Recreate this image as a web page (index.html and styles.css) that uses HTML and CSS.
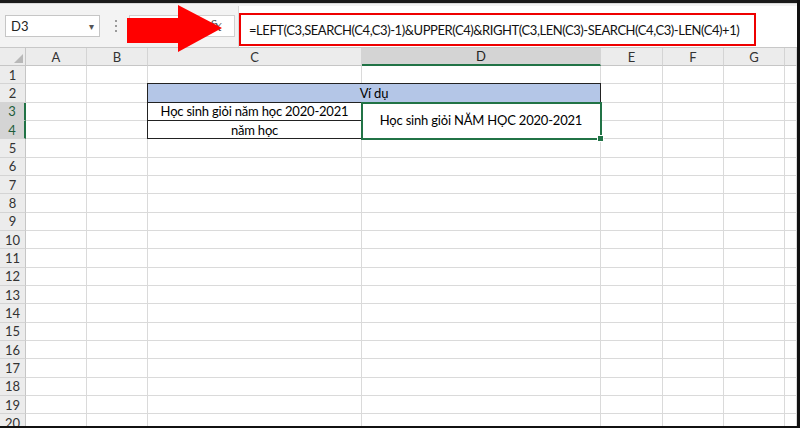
FILE: index.html
```html
<!DOCTYPE html>
<html>
<head>
<meta charset="utf-8">
<link rel="stylesheet" href="styles.css">
</head>
<body>
<div class="frame">
  <div class="topbar"></div>
  <div class="fbar">
    <div class="namebox"><span>D3</span><span class="dd">&#9662;</span></div>
    <div class="dots"><span></span><span></span><span></span></div>
    <div class="fxbox"><span class="fx">fx</span></div>
    <div class="finput">
      <div class="redbox">=LEFT(C3,SEARCH(C4,C3)-1)&amp;UPPER(C4)&amp;RIGHT(C3,LEN(C3)-SEARCH(C4,C3)-LEN(C4)+1)</div>
    </div>
  </div>
  <div class="grid">
    <div class="corner"><svg width="9" height="9" viewBox="0 0 9 9"><polygon points="9,0 9,9 0,9" fill="#b8b8b8"/></svg></div><div class="ch">A</div><div class="ch">B</div><div class="ch">C</div><div class="ch sel">D</div><div class="ch">E</div><div class="ch">F</div><div class="ch">G</div><div class="ch"></div>
    <div class="rh">1</div><div class="c"></div><div class="c"></div><div class="c"></div><div class="c"></div><div class="c"></div><div class="c"></div><div class="c"></div><div class="c"></div>
    <div class="rh">2</div><div class="c"></div><div class="c"></div><div class="c t hd">Ví dụ</div><div class="c"></div><div class="c"></div><div class="c"></div><div class="c"></div>
    <div class="rh sel">3</div><div class="c"></div><div class="c"></div><div class="c t">Học sinh giỏi năm học 2020-2021</div><div class="c t res">Học sinh giỏi NĂM HỌC 2020-2021</div><div class="c"></div><div class="c"></div><div class="c"></div><div class="c"></div>
    <div class="rh sel">4</div><div class="c"></div><div class="c"></div><div class="c t">năm học</div><div class="c"></div><div class="c"></div><div class="c"></div><div class="c"></div>
    <div class="rh">5</div><div class="c"></div><div class="c"></div><div class="c"></div><div class="c"></div><div class="c"></div><div class="c"></div><div class="c"></div><div class="c"></div>
    <div class="rh">6</div><div class="c"></div><div class="c"></div><div class="c"></div><div class="c"></div><div class="c"></div><div class="c"></div><div class="c"></div><div class="c"></div>
    <div class="rh">7</div><div class="c"></div><div class="c"></div><div class="c"></div><div class="c"></div><div class="c"></div><div class="c"></div><div class="c"></div><div class="c"></div>
    <div class="rh">8</div><div class="c"></div><div class="c"></div><div class="c"></div><div class="c"></div><div class="c"></div><div class="c"></div><div class="c"></div><div class="c"></div>
    <div class="rh">9</div><div class="c"></div><div class="c"></div><div class="c"></div><div class="c"></div><div class="c"></div><div class="c"></div><div class="c"></div><div class="c"></div>
    <div class="rh">10</div><div class="c"></div><div class="c"></div><div class="c"></div><div class="c"></div><div class="c"></div><div class="c"></div><div class="c"></div><div class="c"></div>
    <div class="rh">11</div><div class="c"></div><div class="c"></div><div class="c"></div><div class="c"></div><div class="c"></div><div class="c"></div><div class="c"></div><div class="c"></div>
    <div class="rh">12</div><div class="c"></div><div class="c"></div><div class="c"></div><div class="c"></div><div class="c"></div><div class="c"></div><div class="c"></div><div class="c"></div>
    <div class="rh">13</div><div class="c"></div><div class="c"></div><div class="c"></div><div class="c"></div><div class="c"></div><div class="c"></div><div class="c"></div><div class="c"></div>
    <div class="rh">14</div><div class="c"></div><div class="c"></div><div class="c"></div><div class="c"></div><div class="c"></div><div class="c"></div><div class="c"></div><div class="c"></div>
    <div class="rh">15</div><div class="c"></div><div class="c"></div><div class="c"></div><div class="c"></div><div class="c"></div><div class="c"></div><div class="c"></div><div class="c"></div>
    <div class="rh">16</div><div class="c"></div><div class="c"></div><div class="c"></div><div class="c"></div><div class="c"></div><div class="c"></div><div class="c"></div><div class="c"></div>
    <div class="rh">17</div><div class="c"></div><div class="c"></div><div class="c"></div><div class="c"></div><div class="c"></div><div class="c"></div><div class="c"></div><div class="c"></div>
    <div class="rh">18</div><div class="c"></div><div class="c"></div><div class="c"></div><div class="c"></div><div class="c"></div><div class="c"></div><div class="c"></div><div class="c"></div>
    <div class="rh">19</div><div class="c"></div><div class="c"></div><div class="c"></div><div class="c"></div><div class="c"></div><div class="c"></div><div class="c"></div><div class="c"></div>
    <div class="rh">20</div><div class="c"></div><div class="c"></div><div class="c"></div><div class="c"></div><div class="c"></div><div class="c"></div><div class="c"></div><div class="c"></div>
  </div>
  <svg class="arrow" width="240" height="60" viewBox="0 0 240 60"><polygon points="127,18 178,18 178,5 222,28 178,52 178,43 127,43" fill="#ff0000"/></svg>
</div>
</body>
</html>
```
FILE: styles.css
```css
* { box-sizing: border-box; }
html, body { margin: 0; padding: 0; background: #000; }
body { width: 800px; height: 428px; overflow: hidden; }
.frame {
  position: relative;
  width: 800px;
  height: 428px;
  border-right: 3px solid #111;
  border-bottom: 2px solid #111;
  background: #f3f3f3;
  overflow: hidden;
  font-family: Lato, "Liberation Sans", sans-serif;
  display: flex;
  flex-direction: column;
}
.topbar { height: 3px; background: #1a1a1a; flex: none; }
.fbar {
  height: 44px;
  flex: none;
  display: flex;
  align-items: flex-start;
  background: #f3f3f3;
  border-top: 1px solid #d8d8d8;
}
.namebox {
  margin: 11px 0 0 5px;
  width: 95px;
  height: 22px;
  background: #fff;
  border: 1px solid #c6c6c6;
  display: flex;
  align-items: center;
  justify-content: space-between;
  padding: 0 5px 0 5px;
  font-size: 13px;
  color: #222;
}
.dd { font-size: 10px; color: #555; }
.dots {
  margin: 16px 0 0 15px;
  width: 2px;
  display: flex;
  flex-direction: column;
  gap: 3px;
}
.dots span { width: 2px; height: 2px; background: #9a9a9a; display: block; }
.fxbox {
  margin: 11px 0 0 12px;
  width: 106px;
  height: 22px;
  background: #fff;
  border: 1px solid #d0d0d0;
  display: flex;
  align-items: center;
  justify-content: flex-end;
  padding-right: 12px;
}
.fx { font-family: "DejaVu Serif", serif; font-style: italic; font-size: 14px; color: #555; }
.finput {
  margin: 2px 0 0 3px;
  flex: 1;
  height: 42px;
  background: #fff;
  border-left: 1px solid #d8d8d8;
}
.redbox {
  margin-top: 7px;
  width: 517px;
  height: 33px;
  border: 2px solid #ee0000;
  display: flex;
  align-items: center;
  padding-left: 8px;
  font-size: 13px;
  letter-spacing: -0.44px;
  color: #111;
  white-space: nowrap;
}
.grid {
  flex: none;
  display: grid;
  grid-template-columns: 26px 61px 61px 214px 239px 62px 61px 61px 12px;
  grid-template-rows: 18px repeat(20, 18.33px);
  background: #fff;
  font-size: 13px;
  border-top: 1px solid #c8c8c8;
}
.corner {
  background: #ececec;
  border-right: 1px solid #c6c6c6;
  border-bottom: 1px solid #c6c6c6;
  display: flex;
  align-items: flex-end;
  justify-content: flex-end;
  padding: 0 2px 2px 0;
}
.ch {
  background: #ececec;
  border-right: 1px solid #d4d4d4;
  border-bottom: 1px solid #c6c6c6;
  display: flex;
  align-items: center;
  justify-content: center;
  color: #333;
}
.ch.sel { background: #d4d4d4; border-bottom: 2px solid #217346; color: #222; }
.rh {
  background: #ececec;
  border-right: 1px solid #c6c6c6;
  border-bottom: 1px solid #d4d4d4;
  display: flex;
  align-items: center;
  justify-content: center;
  color: #333;
}
.rh.sel { background: #d4d4d4; border-right: 2px solid #217346; color: #1e5e3a; }
.c {
  border-right: 1px solid #dadada;
  border-bottom: 1px solid #dadada;
  display: flex;
  align-items: center;
  justify-content: center;
  color: #000;
  white-space: nowrap;
}
.t {
  letter-spacing: -0.2px;
  border-right-color: #222;
  border-bottom-color: #222;
  box-shadow: -1px 0 0 #222, 0 -1px 0 #222, -1px -1px 0 #222;
}
.hd { grid-column: span 2; background: #b4c6e7; }
.res {
  grid-row: span 2;
  position: relative;
  outline: 2px solid #217346;
  outline-offset: -1px;
}
.res::after {
  content: "";
  position: absolute;
  right: -4px;
  bottom: -4px;
  width: 5px;
  height: 5px;
  background: #217346;
  border: 1px solid #fff;
}
.arrow { position: absolute; left: 0; top: 0; }
```
